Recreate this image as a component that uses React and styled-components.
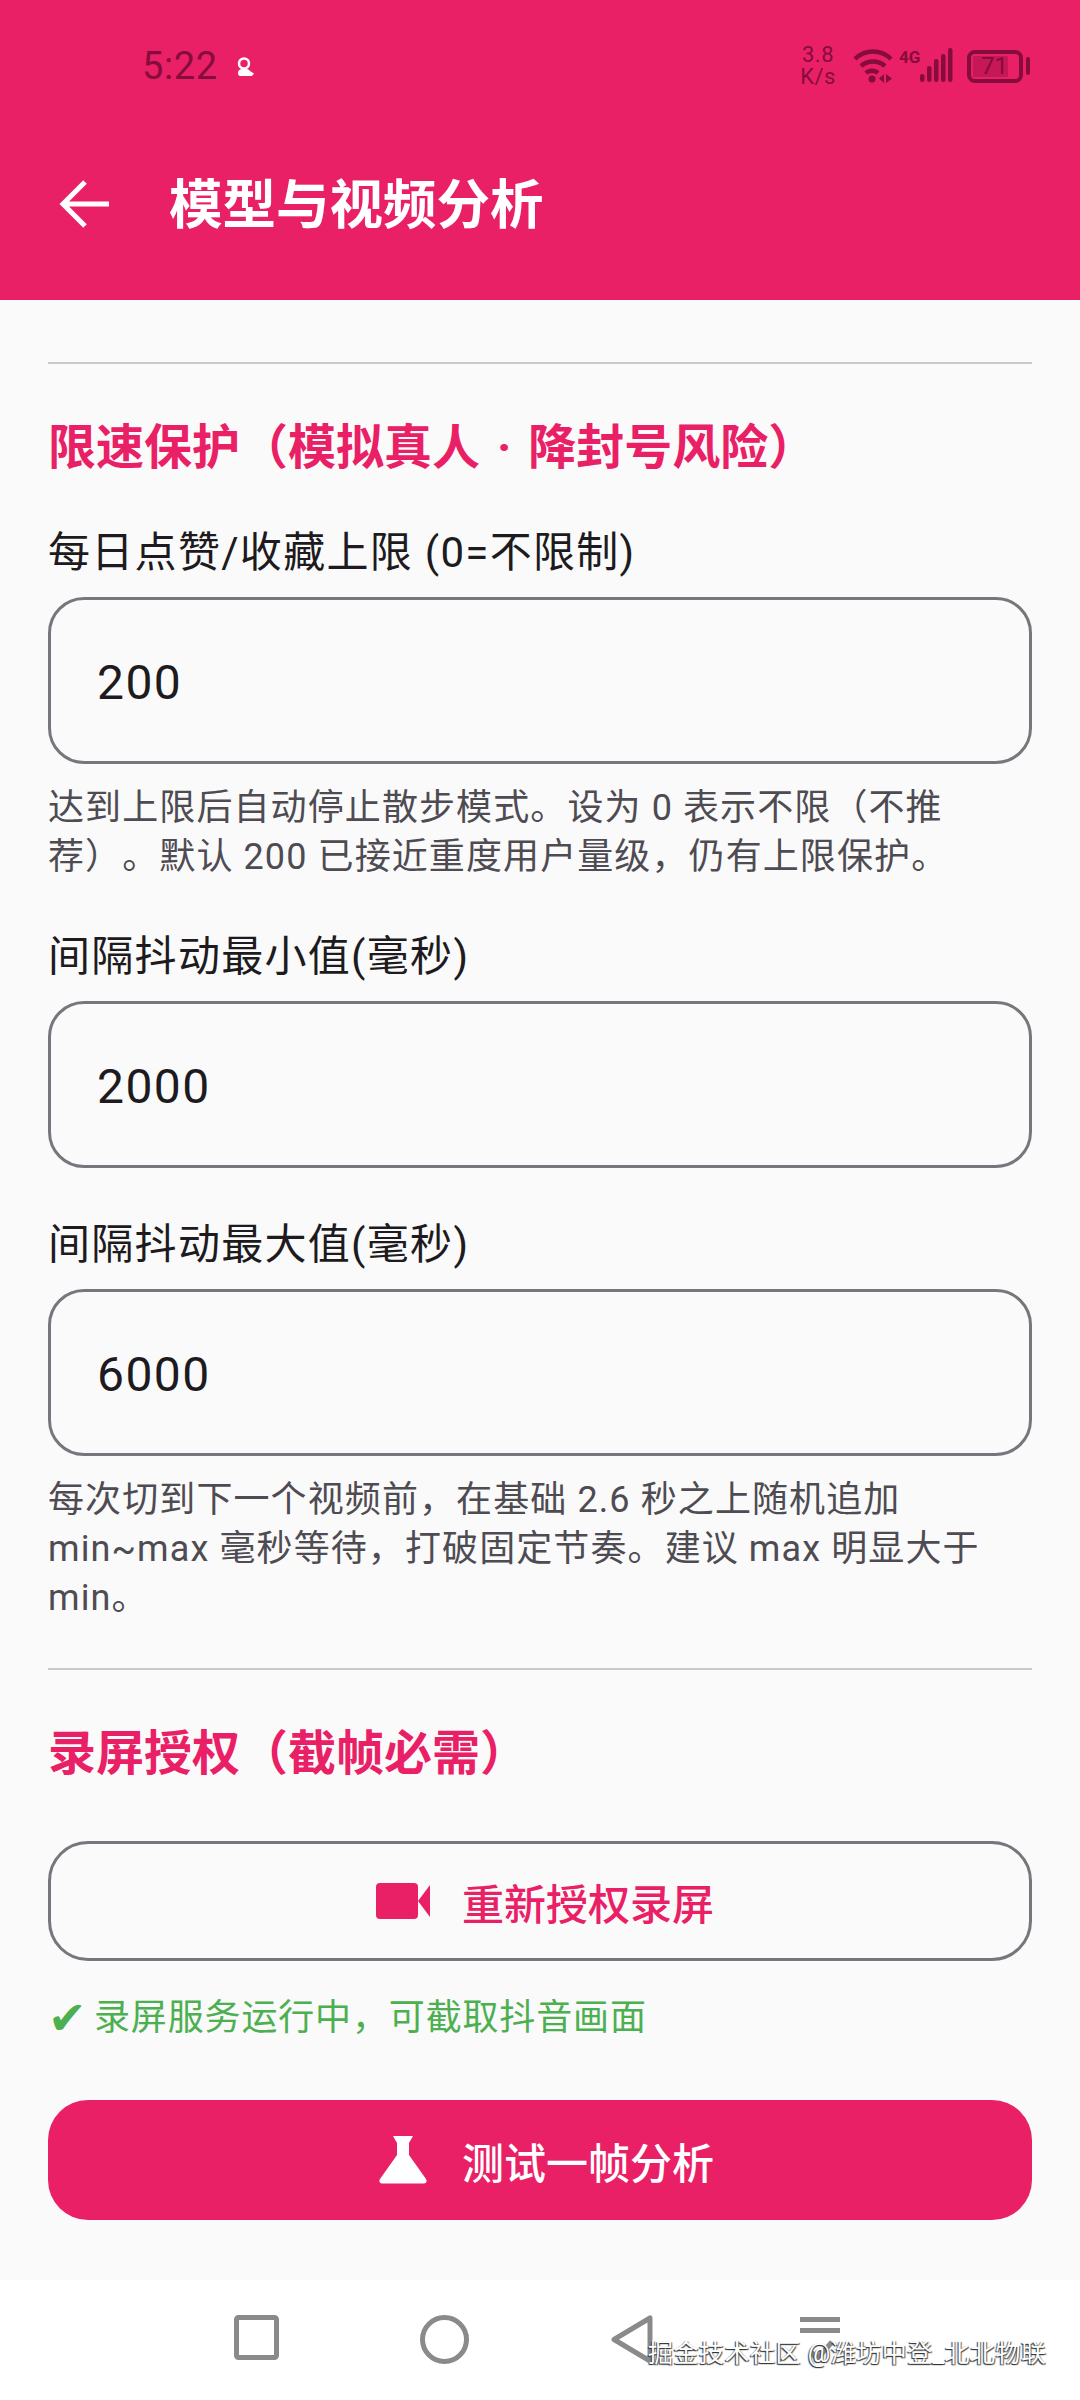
import React from 'react';
import styled, { createGlobalStyle } from 'styled-components';

const PINK = '#ea2066';
const DARK = '#850c3c';

const GlobalStyle = createGlobalStyle`
  * { box-sizing: border-box; }
  html, body { margin: 0; padding: 0; background: #fff; }
  body {
    font-family: Roboto, "Noto Sans CJK SC", sans-serif;
    text-spacing-trim: space-all;
  }
`;

const Screen = styled.div`
  position: relative;
  width: 1080px;
  height: 2400px;
  display: flex;
  flex-direction: column;
  overflow: hidden;
`;

const Header = styled.header`
  height: 300px;
  background: ${PINK};
  display: flex;
  flex-direction: column;
`;

const StatusBar = styled.div`
  height: 108px;
  padding: 24px 50px 0 142px;
  display: flex;
  align-items: center;
  justify-content: space-between;
  color: ${DARK};
`;

const StatusLeft = styled.div`
  display: flex;
  align-items: center;
  gap: 19px;
`;

const Time = styled.span`
  font-size: 38px;
  line-height: 44px;
  letter-spacing: 0.6px;
`;

const StatusRight = styled.div`
  display: flex;
  align-items: center;
`;

const Speed = styled.div`
  width: 38px;
  margin-right: 16px;
  font-size: 22px;
  line-height: 22px;
  letter-spacing: 0.5px;
  text-align: center;
  white-space: nowrap;
`;

const SignalBox = styled.div`
  display: flex;
  align-items: flex-start;
  height: 36px;
  margin-left: 6px;
`;

const NetType = styled.span`
  width: 21px;
  font-size: 17px;
  line-height: 18px;
  font-weight: 700;
`;

const BatteryBox = styled.div`
  position: relative;
  width: 56px;
  height: 33px;
  margin-left: 14px;
  border: 4px solid ${DARK};
  border-radius: 8px;
  font-size: 24px;
  line-height: 25px;
  padding-left: 10px;
  &::before {
    content: '';
    position: absolute;
    left: 2px;
    top: 2px;
    bottom: 2px;
    width: 35px;
    background: rgba(133, 12, 60, 0.35);
  }
`;

const BatteryTip = styled.i`
  width: 4px;
  height: 18px;
  margin-left: 3px;
  background: ${DARK};
  border-radius: 2px;
`;

const AppBar = styled.div`
  flex: 1;
  display: flex;
  align-items: center;
  padding: 0 0 0 58px;
  gap: 59px;
`;

const Title = styled.h1`
  margin: 3px 0 0;
  font-size: 53.5px;
  font-weight: 700;
  line-height: 60px;
  color: #fff;
`;

const Body = styled.main`
  flex: 1;
  background: #fafafa;
  padding: 62px 48px 0;
  display: flex;
  flex-direction: column;
`;

const Divider = styled.div`
  height: 2px;
  background: #c9c9cb;
  margin-bottom: 52px;
`;

const SectionTitle = styled.h2`
  margin: 0 0 ${({ $after }) => $after}px;
  font-size: 48px;
  line-height: 64px;
  font-weight: 700;
  color: ${PINK};
`;

const DotGap = styled.span`
  padding: 0 5px;
`;

const Label = styled.div`
  font-size: 42px;
  line-height: 50px;
  letter-spacing: 1.3px;
  color: #1d1b20;
  margin-bottom: 19px;
`;

const InputBox = styled.div`
  height: 167px;
  border: 3px solid #79757c;
  border-radius: 36px;
  padding: 4px 46px 0;
  display: flex;
  align-items: center;
  font-size: 48px;
  letter-spacing: 1.4px;
  color: #1d1b20;
  margin-bottom: ${({ $after }) => $after}px;
`;

const Hint = styled.p`
  margin: 0 0 ${({ $after }) => $after}px;
  font-size: 36px;
  line-height: 49px;
  letter-spacing: 1.1px;
  color: #4e4b52;
`;

const OutlineButton = styled.div`
  height: 120px;
  border: 3px solid #79757c;
  border-radius: 40px;
  padding-left: 10px;
  display: flex;
  align-items: center;
  justify-content: center;
  gap: 32px;
  font-size: 42px;
  font-weight: 500;
  color: ${PINK};
  margin-bottom: 33px;
`;

const FilledButton = styled(OutlineButton)`
  border: 0;
  background: ${PINK};
  color: #fff;
  margin-bottom: 0;
`;

const ButtonIcon = styled.span`
  width: 54px;
  display: flex;
  justify-content: center;
`;

const OkText = styled.div`
  display: flex;
  align-items: center;
  gap: 14px;
  font-size: 36px;
  line-height: 48px;
  letter-spacing: 0.85px;
  color: #4caf50;
  margin-bottom: 58px;
`;

const OkMark = styled.span`
  width: 32px;
  font-size: 46px;
`;

const NavBar = styled.nav`
  height: 120px;
  background: #fff;
  padding: 35px 0 0 162px;
  display: grid;
  grid-template-columns: repeat(4, 188px);
  justify-items: center;
  align-items: start;
`;

const Watermark = styled.div`
  position: absolute;
  left: 648px;
  top: 2336px;
  font-size: 25px;
  line-height: 36px;
  letter-spacing: 0.5px;
  color: #fff;
  white-space: nowrap;
  text-shadow: -1px 1px 1px #333, 1px 1px 1px #555;
`;

const BackIcon = () => (
  <svg width="52" height="48" viewBox="0 0 52 48" fill="none" stroke="#fff" strokeWidth="5">
    <path d="M51 24H6M27 2 5 24l22 22" />
  </svg>
);

const PersonIcon = () => (
  <svg width="18" height="19" viewBox="0 0 18 19">
    <circle cx="7" cy="6.500" r="5" fill="none" stroke="#fff" strokeWidth="2.500" />
    <path d="M1 16c0-3 3-4.500 6-4.500 3 0 5 1 6 2.500l4 2.500-2 2.500H3c-1 0-2-1-2-3z" fill="#fff" />
  </svg>
);

const WifiIcon = () => (
  <svg width="40" height="36" viewBox="0 0 40 36" fill="none" stroke={DARK} strokeWidth="4.500">
    <path d="M2 11C12 1 28 1 38 11M8 18c7-6 17-6 24 0M13 25c3-3 9-3 12 0" />
    <circle cx="19" cy="31" r="3.500" fill={DARK} stroke="none" />
    <path d="M31 26v9l-5-4.500zM33 26v9l6-4.500z" fill={DARK} stroke="none" />
  </svg>
);

const SignalBars = () => (
  <svg width="33" height="36" viewBox="0 0 33 36" fill={DARK}>
    <rect x="0" y="26" width="4.500" height="8" rx="2.200" />
    <rect x="7" y="18" width="4.500" height="16" rx="2.200" />
    <rect x="14" y="11" width="4.500" height="23" rx="2.200" />
    <rect x="21" y="6" width="4.500" height="28" rx="2.200" />
    <rect x="28" y="0" width="4.500" height="34" rx="2.200" />
  </svg>
);

const CameraIcon = () => (
  <svg width="54" height="36" viewBox="0 0 54 36" fill={PINK}>
    <rect x="0" y="0" width="42" height="36" rx="4" />
    <path d="M42 18 54 2v32z" />
  </svg>
);

const FlaskIcon = () => (
  <svg width="48" height="48" viewBox="0 0 48 48" fill="#fff">
    <path d="M14 0h20l-4 7v12l17 24c1.500 2.500 0 4.500-2 4.500H3c-2 0-3.500-2-2-4.500l17-24V7z" />
  </svg>
);

const SquareNav = () => (
  <svg width="45" height="45" viewBox="0 0 45 45" fill="none" stroke="#8a8a8a" strokeWidth="5">
    <rect x="2.500" y="2.500" width="40" height="40" rx="2" />
  </svg>
);

const CircleNav = () => (
  <svg width="49" height="49" viewBox="0 0 49 49" fill="none" stroke="#8a8a8a" strokeWidth="5">
    <circle cx="24.500" cy="24.500" r="22" />
  </svg>
);

const TriangleNav = () => (
  <svg width="42" height="49" viewBox="0 0 42 49" fill="none" stroke="#8a8a8a" strokeWidth="5" strokeLinejoin="round">
    <path d="M39 3v43L3 24.500z" />
  </svg>
);

const MenuNav = () => (
  <svg width="40" height="50" viewBox="0 0 40 50" fill="none" stroke="#8a8a8a" strokeWidth="5">
    <path d="M0 4.500h40M0 15.500h40M11 37l6 7 15-17" />
  </svg>
);

export default function App() {
  return (
    <Screen>
      <GlobalStyle />
      <Header>
        <StatusBar>
          <StatusLeft>
            <Time>5:22</Time>
            <PersonIcon />
          </StatusLeft>
          <StatusRight>
            <Speed>
              3.8
              <br />
              K/s
            </Speed>
            <WifiIcon />
            <SignalBox>
              <NetType>4G</NetType>
              <SignalBars />
            </SignalBox>
            <BatteryBox>71</BatteryBox>
            <BatteryTip />
          </StatusRight>
        </StatusBar>
        <AppBar>
          <BackIcon />
          <Title>模型与视频分析</Title>
        </AppBar>
      </Header>
      <Body>
        <Divider />
        <SectionTitle $after={48}>
          限速保护（模拟真人<DotGap> · </DotGap>降封号风险）
        </SectionTitle>
        <Label>每日点赞/收藏上限 (0=不限制)</Label>
        <InputBox $after={20}>200</InputBox>
        <Hint $after={50}>
          达到上限后自动停止散步模式。设为 0 表示不限（不推荐）。默认 200 已接近重度用户量级，仍有上限保护。
        </Hint>
        <Label>间隔抖动最小值(毫秒)</Label>
        <InputBox $after={52}>2000</InputBox>
        <Label>间隔抖动最大值(毫秒)</Label>
        <InputBox $after={20}>6000</InputBox>
        <Hint $after={45}>
          每次切到下一个视频前，在基础 2.6 秒之上随机追加 min~max 毫秒等待，打破固定节奏。建议 max 明显大于 min。
        </Hint>
        <Divider />
        <SectionTitle $after={55}>录屏授权（截帧必需）</SectionTitle>
        <OutlineButton>
          <ButtonIcon>
            <CameraIcon />
          </ButtonIcon>
          重新授权录屏
        </OutlineButton>
        <OkText>
          <OkMark>✔</OkMark>
          录屏服务运行中，可截取抖音画面
        </OkText>
        <FilledButton>
          <ButtonIcon>
            <FlaskIcon />
          </ButtonIcon>
          测试一帧分析
        </FilledButton>
      </Body>
      <NavBar>
        <SquareNav />
        <CircleNav />
        <TriangleNav />
        <MenuNav />
      </NavBar>
      <Watermark>掘金技术社区 @潍坊中登_北北物联</Watermark>
    </Screen>
  );
}
